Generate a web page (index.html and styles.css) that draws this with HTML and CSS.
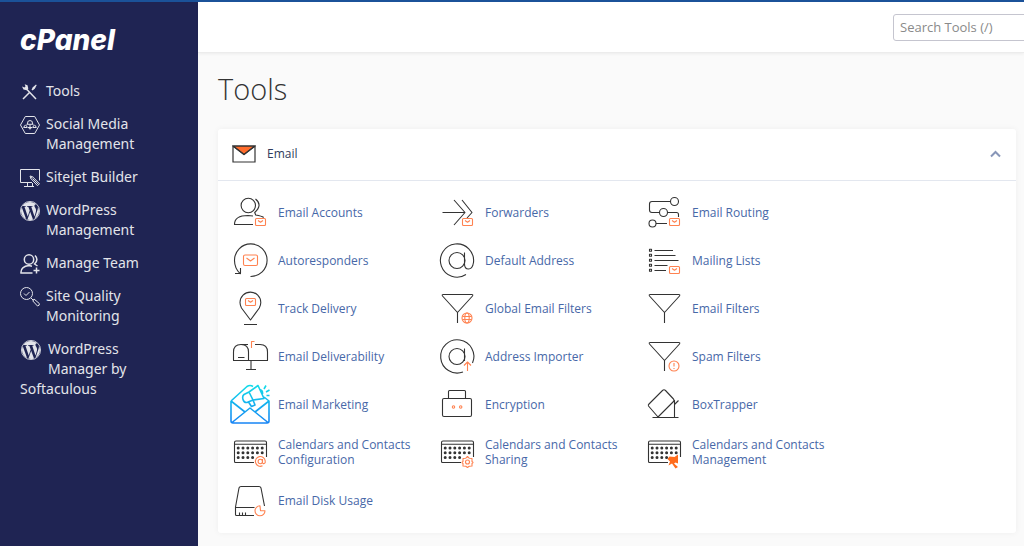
FILE: index.html
```html
<!DOCTYPE html>
<html lang="en">
<head>
<meta charset="utf-8">
<meta name="viewport" content="width=device-width, initial-scale=1">
<title>cPanel - Tools</title>
<link rel="stylesheet" href="styles.css">
</head>
<body>
<svg class="defs" aria-hidden="true">
  <symbol id="wordpress" viewBox="0 0 24 24">
    <circle cx="12" cy="12" r="11.5" fill="none" stroke="currentColor" stroke-width="1"/>
    <path fill="currentColor" d="M21.469 6.825c.84 1.537 1.318 3.3 1.318 5.175 0 3.979-2.156 7.456-5.363 9.325l3.295-9.527c.615-1.54.82-2.771.82-3.864 0-.405-.026-.78-.07-1.11m-7.981.105c.647-.03 1.232-.105 1.232-.105.582-.075.514-.93-.067-.899 0 0-1.755.135-2.88.135-1.064 0-2.85-.15-2.85-.15-.585-.03-.661.855-.075.885 0 0 .54.061 1.125.09l1.68 4.605-2.37 7.08L5.354 6.9c.649-.03 1.234-.1 1.234-.1.585-.075.516-.93-.065-.896 0 0-1.746.138-2.874.138-.2 0-.438-.008-.69-.015C4.911 3.15 8.235 1.215 12 1.215c2.809 0 5.365 1.072 7.286 2.833-.046-.003-.091-.009-.141-.009-1.06 0-1.812.923-1.812 1.914 0 .89.513 1.643 1.06 2.531.411.72.89 1.643.89 2.977 0 .915-.354 1.994-.821 3.479l-1.075 3.585-3.9-11.61.001.014zM12 22.784c-1.059 0-2.081-.153-3.048-.437l3.237-9.406 3.315 9.087c.024.053.05.101.078.149-1.12.393-2.325.609-3.582.609M1.211 12c0-1.564.336-3.05.935-4.39L7.29 21.709C3.694 19.96 1.212 16.271 1.211 12"/>
  </symbol>
  <symbol id="mail-badge" viewBox="0 0 40 40">
    <rect x="25.500" y="26.500" width="10" height="7" rx="1"/><path d="M28 28.500l2.500 1.800 2.500-1.800"/>
  </symbol>
  <symbol id="calendar" viewBox="0 0 40 40">
    <path d="M24 30.500H5.500q-1 0-1-1V10.500q0-1.500 1.500-1.500H35q1.500 0 1.500 1.500V25M4.500 12.200H36.500"/>
    <path class="dots" d="M8.200 16h.01M13 16h.01M17.800 16h.01M22.600 16h.01M27.400 16h.01M32.200 16h.01M8.200 20.800h.01M13 20.800h.01M17.800 20.800h.01M22.600 20.800h.01M27.400 20.800h.01M32.200 20.800h.01M8.200 25.600h.01M13 25.600h.01M17.800 25.600h.01M22.600 25.600h.01"/>
  </symbol>
  <symbol id="funnel" viewBox="0 0 40 40">
    <path d="M20.500 35V24.500L5.500 8q-.8-1.500.8-1.500h28.400q1.600 0 .8 1.500L20.500 24.500"/>
  </symbol>
</svg>

<div class="app">
  <aside class="sidebar">
    <a class="brand" href="#">cPanel</a>
    <nav class="nav" aria-label="Main">
      <a class="nav-link" href="#">
        <svg class="nav-icon" viewBox="0 0 20 20" aria-hidden="true"><path class="medium" d="M3 17l7-7M12 8l3-3M6.500 7l9.500 10"/><path class="solid" d="M12.500 5.500l3.500-3 .7.700-2.500 4-2 .5zM2 4.500l2.500 1 1-1-.8-2.300 2.800 1 .8 3.300-1.500 1.800-3.300-.8z"/></svg>
        <span>Tools</span>
      </a>
      <a class="nav-link" href="#">
        <svg class="nav-icon" viewBox="0 0 20 20" aria-hidden="true"><path d="M5.300 1.500h9.400L19.500 10l-4.800 8.500H5.300L.5 10z"/><path d="M7.500 9q-.5-3.500 2.500-3.500T12.500 9M6.500 9.300h7M3.500 12.500h4M12.500 12.500h4M8 12.500h4M10 9.500v4"/><path d="M4 12.300q0-2 1.500-2t1.500 2M13 12.300q0-2 1.500-2t1.500 2"/><circle cx="10" cy="13.500" r=".7"/></svg>
        <span>Social Media Management</span>
      </a>
      <a class="nav-link" href="#">
        <svg class="nav-icon" viewBox="0 0 20 20" aria-hidden="true"><path d="M12 14.500H.5V1.500h19v11M7.500 15v3M12.500 15v3M4 18.500h10"/><path d="M10 8l2.500.7 7 7-2 2-6.500-7zM12.500 8.700l-1.800 1.800M12.500 10.500l6 6"/></svg>
        <span>Sitejet Builder</span>
      </a>
      <a class="nav-link" href="#">
        <svg class="nav-icon" aria-hidden="true"><use href="#wordpress"/></svg>
        <span>WordPress Management</span>
      </a>
      <a class="nav-link" href="#">
        <svg class="nav-icon" viewBox="0 0 20 20" aria-hidden="true"><circle class="medium" cx="9" cy="5.500" r="4.700"/><path class="medium" d="M15 1.500q4 4-.5 8.500l3 2M12.500 19H1q-.5-6.500 8-7.500l3 .8M16.500 13.500v6M13.500 16.500h6"/></svg>
        <span>Manage Team</span>
      </a>
      <a class="nav-link" href="#">
        <svg class="nav-icon" viewBox="0 0 20 20" aria-hidden="true"><circle cx="6.500" cy="6.500" r="6"/><path d="M4 6.500l2 2L9.500 5M11 11l2.500 2.500M14 12l5.300 4.500q.7 2-1.800 2.500l-4.700-5z"/></svg>
        <span>Site Quality Monitoring</span>
      </a>
      <a class="nav-wrap" href="#">
        <svg class="nav-icon" aria-hidden="true"><use href="#wordpress"/></svg>WordPress Manager by Softaculous
      </a>
    </nav>
  </aside>

  <div class="page">
    <header class="topbar">
      <input class="search" type="search" placeholder="Search Tools (/)" aria-label="Search Tools">
    </header>
    <main class="content">
      <h1 class="title">Tools</h1>
      <section class="card">
        <div class="card-head">
          <svg class="head-icon" viewBox="0 0 24 18" aria-hidden="true"><path class="flap" d="M1 1h22L12 9.500z"/><path d="M1 1h22v16H1zM1 1l11 8.500L23 1"/></svg>
          <h2 class="card-title">Email</h2>
          <button class="toggle" type="button" aria-label="Collapse Email" aria-expanded="true">
            <svg class="chevron" viewBox="0 0 12 8" aria-hidden="true"><path d="M1.500 6.500L6 2l4.500 4.500"/></svg>
          </button>
        </div>
        <div class="tools">
          <a class="tool" href="#"><svg class="icon" viewBox="0 0 40 40" aria-hidden="true"><circle cx="18.300" cy="13.500" r="7.200"/><path d="M25.500 7q7.500 6-.8 13.500l1 2.500q6 1 8 2.500M23 32.500H4.500q0-9 13.500-9l5 .5"/><use class="accent" href="#mail-badge"/></svg><span>Email Accounts</span></a>
          <a class="tool" href="#"><svg class="icon" viewBox="0 0 40 40" aria-hidden="true"><path d="M5.500 20.500h22M17 8l11 12.500L17 33M25 8l10 12.500-5 5.500"/><use class="accent" href="#mail-badge"/></svg><span>Forwarders</span></a>
          <a class="tool" href="#"><svg class="icon" viewBox="0 0 40 40" aria-hidden="true"><circle cx="30.500" cy="9.500" r="4"/><circle cx="19.500" cy="20.500" r="4"/><circle cx="8.500" cy="31.500" r="3.500"/><path d="M26.500 9.500H8q-2.500 0-2.500 2.500v6q0 2.500 2.500 2.500h7.500M23.500 20.500h9q2 0 2 2V25M12 31.500h11"/><use class="accent" href="#mail-badge"/></svg><span>Email Routing</span></a>

          <a class="tool" href="#"><svg class="icon" viewBox="0 0 40 40" aria-hidden="true"><path d="M20.500 36.500a16.300 16.300 0 1 0-16-16q0 8 6 13.500M5 33.500h5.500v-5.500"/><g class="accent"><rect x="13.500" y="15" width="14" height="10.500" rx="1.500"/><path d="M16.500 18l4 3 4-3"/></g></svg><span>Autoresponders</span></a>
          <a class="tool" href="#"><svg class="icon" viewBox="0 0 40 40" aria-hidden="true"><circle cx="20" cy="20.500" r="8"/><path d="M27.500 12.500V24q0 5 4 5t5-6.500a16.600 16.600 0 1 0-7.500 12"/></svg><span>Default Address</span></a>
          <a class="tool" href="#"><svg class="icon" viewBox="0 0 40 40" aria-hidden="true"><path d="M10.500 10.500H29M10.500 15.500h21M10.500 20.500h24M10.500 25.500h13M10.500 30.500H22"/><path d="M5.500 9.200h2v2h-2zM5.500 14.200h2v2h-2zM5.500 19.200h2v2h-2zM5.500 24.200h2v2h-2zM5.500 29.200h2v2h-2z"/><use class="accent" href="#mail-badge"/></svg><span>Mailing Lists</span></a>

          <a class="tool" href="#"><svg class="icon" viewBox="0 0 40 40" aria-hidden="true"><path d="M20.500 32L11.500 20Q10 17 10 14.500a10.400 10.400 0 0 1 20.800 0q0 2.500-1.500 5.500zM14 36.500h13"/><g class="accent"><rect x="15.500" y="10.500" width="10" height="7" rx="1"/><path d="M18 12.500l2.500 1.800 2.500-1.800"/></g></svg><span>Track Delivery</span></a>
          <a class="tool" href="#"><svg class="icon" viewBox="0 0 40 40" aria-hidden="true"><use href="#funnel"/><g class="accent"><circle class="knock" cx="30" cy="30" r="5"/><ellipse cx="30" cy="30" rx="2.200" ry="5"/><path d="M25.500 28.500h9M25.500 31.500h9"/></g></svg><span>Global Email Filters</span></a>
          <a class="tool" href="#"><svg class="icon" viewBox="0 0 40 40" aria-hidden="true"><use href="#funnel"/></svg><span>Email Filters</span></a>

          <a class="tool" href="#"><svg class="icon" viewBox="0 0 40 40" aria-hidden="true"><path d="M18.500 24.500h-15V16q0-7.500 7.500-7.500t7.500 7.500zM11 8.500h7M25 8.500h5q7.500 0 7.500 7.500v8.500h-19M21 24.500v9M16 33.500h10M8 21.500h6.500"/><path class="accent" d="M21.500 12V5.500h3"/></svg><span>Email Deliverability</span></a>
          <a class="tool" href="#"><svg class="icon" viewBox="0 0 40 40" aria-hidden="true"><circle cx="20" cy="20.500" r="8"/><path d="M27.500 12.500V25M35.500 27a16.600 16.600 0 1 0-9.500 9"/><path class="accent" d="M30.500 35v-9M27 29.500l3.500-3.500 3.500 3.500"/></svg><span>Address Importer</span></a>
          <a class="tool" href="#"><svg class="icon" viewBox="0 0 40 40" aria-hidden="true"><use href="#funnel"/><g class="accent"><circle class="knock" cx="30" cy="30" r="5"/><path d="M30 27v3.500M30 32v1"/></g></svg><span>Spam Filters</span></a>

          <a class="tool" href="#"><svg class="icon" viewBox="0 0 40 40" aria-hidden="true"><defs><linearGradient id="sky" gradientUnits="userSpaceOnUse" x1="20" y1="0" x2="20" y2="40"><stop offset="0" stop-color="#12dfe8"/><stop offset="1" stop-color="#1682f5"/></linearGradient></defs><g class="marketing" stroke="url(#sky)"><path d="M1 17v20q0 2 2 2h34q2 0 2-2V17l-5-4M1 17L17 2.500q3-2 6 0M1 17l14 11M39 17L25 28M2 38.500l13-10.500 5-4 5 4 13 10.500"/><path d="M14 10.500l5-2.500 9-6.500 6 13-11 1.500-6 2.500q-3 .5-4-3t1-5zM19 8l4 8M18.500 18l3 4.500 3.500-1.500-2-5M30 5.500q3 1 2.500 4.500M34 5l2-3.500M36 8l3.500-2M36.500 11.500h3"/></g></svg><span>Email Marketing</span></a>
          <a class="tool" href="#"><svg class="icon" viewBox="0 0 40 40" aria-hidden="true"><rect x="5.500" y="14.500" width="29" height="18" rx="1.500"/><path d="M11.500 14V7.500q0-1 1-1h15q1 0 1 1V14"/><g class="accent"><circle cx="16.500" cy="23" r="1.200"/><circle cx="23.700" cy="23" r="1.200"/></g></svg><span>Encryption</span></a>
          <a class="tool" href="#"><svg class="icon" viewBox="0 0 40 40" aria-hidden="true"><path d="M18.500 6.500q1.500-1.500 3 0l8 8.500q1 1 0 2.500L14 33 4.500 22q-.5-1 .5-2zM8.500 33.500h26M30.500 16v17M30.500 20.500l4-4"/></svg><span>BoxTrapper</span></a>

          <a class="tool" href="#"><svg class="icon" viewBox="0 0 40 40" aria-hidden="true"><use href="#calendar"/><g class="accent"><circle cx="30.300" cy="29.500" r="2.200"/><path d="M32.500 27v3.500q.2 1.500 1.700 1t1-2.500a4.900 4.900 0 1 0-2.700 4.800"/></g></svg><span>Calendars and Contacts Configuration</span></a>
          <a class="tool" href="#"><svg class="icon" viewBox="0 0 40 40" aria-hidden="true"><use href="#calendar"/><g class="accent"><path class="knock" d="M30.500 24.500l1.700 1.700 2.800.3v3l1 1-1 1v2.500l-2.800.3-1.700 1.200-1.700-1.200-2.800-.3V31.500l-1-1 1-1v-3l2.800-.3z"/><circle cx="30.500" cy="30" r="2"/></g></svg><span>Calendars and Contacts Sharing</span></a>
          <a class="tool" href="#"><svg class="icon" viewBox="0 0 40 40" aria-hidden="true"><use href="#calendar"/><path class="hammer" d="M23.500 27l2-2.500 5 .5 3.500-2.500v9l-2.500-1-1.500 1 4 3.500-2.500 1.500-3.500-5-3.500 2 1.500-4z"/></svg><span>Calendars and Contacts Management</span></a>

          <a class="tool" href="#"><svg class="icon" viewBox="0 0 40 40" aria-hidden="true"><path d="M24 35.500H6.500q-1 0-1-1V27L9 8q.5-1.500 2-1.500h18q1.500 0 2 1.500l3.500 18M5.500 27.500h19M9.500 32.500V35M12.500 32.500V35M15.500 32.500V35"/><path class="accent" d="M30 25.800a5 5 0 1 0 5 5h-4.500z"/></svg><span>Email Disk Usage</span></a>
        </div>
      </section>
    </main>
  </div>
</div>
</body>
</html>
```
FILE: styles.css
```css
* { box-sizing: border-box; }

body {
  margin: 0;
  background: #fafafa;
  color: #333;
  font-family: "Open Sans", "Noto Sans", sans-serif;
  font-size: 12px;
}

a { color: inherit; text-decoration: none; }
a:hover { text-decoration: underline; }

.defs { display: none; }

.app {
  display: flex;
  min-height: 100vh;
  border-top: 2px solid #1b5299;
  overflow: hidden;
}

.sidebar {
  flex: 0 0 198px;
  padding: 20px;
  background: #1f2453;
  color: #e3e4ea;
}

.brand {
  display: block;
  color: #fff;
  font-family: Inter, "Open Sans", sans-serif;
  font-size: 28px;
  font-style: italic;
  font-weight: 800;
  line-height: 36px;
}

.nav {
  display: flex;
  flex-direction: column;
  gap: 13px;
  margin-top: 23px;
  font-family: "Noto Sans", "Open Sans", sans-serif;
  font-size: 14px;
  line-height: 20px;
}

.nav-link { display: flex; align-items: flex-start; gap: 6px; }

.nav-icon {
  flex: none;
  width: 20px;
  height: 20px;
  margin: 1px 0 -1px;
  fill: none;
  stroke: currentColor;
  stroke-width: 1;
}
.nav-icon .medium { stroke-width: 1.5; }
.nav-icon .solid { fill: currentColor; stroke: none; }
.nav-icon use { stroke: none; }

.nav-wrap { padding-right: 30px; }
.nav-wrap .nav-icon { float: left; margin: 1px 7px 16px 1px; }

.page { flex: 1; min-width: 0; }

.topbar {
  display: flex;
  justify-content: flex-end;
  padding: 12px 0 11px;
  background: #fff;
  border-bottom: 1px solid #ececec;
  box-shadow: 0 1px 3px rgba(0, 0, 0, 0.06);
}

.search {
  flex: none;
  width: 160px;
  height: 27px;
  margin-right: -29px;
  padding: 0 6px 1px;
  border: 1px solid #c5c5cf;
  border-radius: 3px;
  background: #fff;
  font: 13px "Open Sans", "Noto Sans", sans-serif;
  appearance: none;
}
.search::placeholder { color: #8a8a8a; }

.content { padding: 16px 8px 13px 20px; }

.title {
  margin: 0 0 20px;
  font-size: 29px;
  font-weight: 300;
  line-height: 40px;
}

.card {
  background: #fff;
  border-radius: 3px;
  box-shadow: 0 0 6px rgba(0, 0, 0, 0.05);
}

.card-head {
  display: flex;
  align-items: center;
  height: 52px;
  padding: 0 14px 1px;
  border-bottom: 1px solid #e3e7ef;
}

.head-icon {
  width: 24px;
  height: 18px;
  margin-right: 11px;
  fill: none;
  stroke: #333;
  stroke-width: 1.2;
}
.head-icon .flap { fill: #ff6c2c; }

.card-title {
  flex: 1;
  margin: 0;
  color: #2f3b5c;
  font-size: 12px;
  font-weight: 400;
  line-height: 20px;
}

.toggle {
  display: flex;
  padding: 0;
  border: 0;
  background: none;
}
.chevron {
  width: 13px;
  height: 8px;
  fill: none;
  stroke: #8896b8;
  stroke-width: 2;
}

.tools {
  display: grid;
  grid-template-columns: repeat(auto-fill, 207px);
  grid-auto-rows: minmax(48px, auto);
  padding: 7px 12px 9px;
}

.tool {
  display: flex;
  align-items: center;
  gap: 8px;
  color: #4768a8;
  line-height: 15px;
}

.icon {
  flex: none;
  width: 40px;
  height: 40px;
  fill: none;
  stroke: #333;
  stroke-width: 1.1;
  stroke-linejoin: round;
}
.accent { stroke: #ff8250; }
.knock { fill: #fff; }
.dots { stroke-width: 3; stroke-linecap: round; }
.hammer { fill: #ff6c1c; stroke: none; }
.marketing { stroke-width: 1.6; }
```
